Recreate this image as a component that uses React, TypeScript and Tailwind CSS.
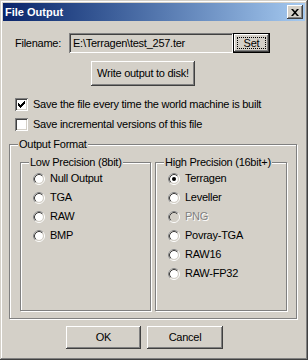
import React from 'react'

const raised =
  'shadow-[inset_-1px_-1px_#404040,inset_1px_1px_#ffffff,inset_-2px_-2px_#808080,inset_2px_2px_#d4d0c8]'
const sunken =
  'shadow-[inset_1px_1px_#808080,inset_-1px_-1px_#ffffff,inset_2px_2px_#404040,inset_-2px_-2px_#d4d0c8]'

function Radio({ checked = false, disabled = false }: { checked?: boolean; disabled?: boolean }) {
  return (
    <svg width="12" height="12" viewBox="0 0 12 12" className="shrink-0">
      <circle cx="6" cy="6" r="4" fill={disabled ? '#d4d0c8' : '#ffffff'} />
      <circle cx="6" cy="6" r="5.5" fill="none" stroke="#ffffff" />
      <path d="M2.11 9.89 A5.5 5.5 0 0 1 9.89 2.11" fill="none" stroke="#808080" />
      <circle cx="6" cy="6" r="4.5" fill="none" stroke="#d4d0c8" />
      <path d="M2.82 9.18 A4.5 4.5 0 0 1 9.18 2.82" fill="none" stroke="#404040" />
      {checked && <circle cx="6" cy="6" r="2" fill="#000000" />}
    </svg>
  )
}

function Checkbox({ checked = false }: { checked?: boolean }) {
  return (
    <div className={`flex h-[13px] w-[13px] shrink-0 items-center justify-center bg-white ${sunken}`}>
      {checked && (
        <svg width="7" height="7" viewBox="0 0 7 7">
          <path d="M0 2h1v1h1v1h1v-1h1v-1h1v-1h1v-1h1v3h-1v1h-1v1h-1v1h-1v1h-1v-1h-1v-1h-1z" fill="#000" />
        </svg>
      )}
    </div>
  )
}

function Option({ label, checked, disabled }: { label: string; checked?: boolean; disabled?: boolean }) {
  return (
    <div className="flex h-[19px] items-center gap-[5px]">
      <Radio checked={checked} disabled={disabled} />
      <span className={disabled ? 'text-[#808080] [text-shadow:1px_1px_#ffffff]' : ''}>{label}</span>
    </div>
  )
}

function Group({ title, children, className = '' }: { title: string; children: React.ReactNode; className?: string }) {
  return (
    <fieldset
      className={`border border-[#808080] pl-[8px] shadow-[inset_1px_1px_#ffffff,1px_1px_#ffffff] ${className}`}
    >
      <legend className="bg-[#d4d0c8] px-[1px] leading-[13px]">{title}</legend>
      {children}
    </fieldset>
  )
}

export default function App() {
  return (
    <div
      className="flex h-[360px] w-[308px] flex-col bg-[#d4d0c8] text-[11px] leading-[13px] tracking-[-0.25px] text-black shadow-[inset_-1px_-1px_#404040,inset_1px_1px_#d4d0c8,inset_-2px_-2px_#808080,inset_2px_2px_#ffffff]"
      style={{ fontFamily: '"Liberation Sans", Arial, sans-serif' }}
    >
      {/* Title bar */}
      <div className="mx-[3px] mt-[3px] flex h-[18px] items-start justify-between bg-gradient-to-r from-[#0a246a] to-[#a6caf0] pl-[2px] pr-[2px]">
        <span className="mt-[3px] text-[11px] font-bold tracking-normal text-white">File Output</span>
        <div className={`mt-[2px] flex h-[14px] w-[16px] items-center justify-center bg-[#d4d0c8] ${raised}`}>
          <svg width="8" height="7" viewBox="0 0 8 7">
            <path d="M0 0h2l2 2.3L6 0h2L5 3.5 8 7H6L4 4.7 2 7H0l3-3.5z" fill="#000" />
          </svg>
        </div>
      </div>

      {/* Filename row */}
      <div className="mt-[12px] flex h-[20px] items-center pl-[15px]">
        <span className="w-[54px]">Filename:</span>
        <div className={`flex h-[20px] w-[164px] items-center bg-[#d4d0c8] pl-[4px] ${sunken}`}>
          E:\Terragen\test_257.ter
        </div>
        <button className="flex h-[20px] w-[37px] items-center justify-center border border-black bg-[#d4d0c8] p-0">
          <span className={`flex h-full w-full p-[3px] ${raised}`}>
            <span className="flex flex-1 items-center justify-center border border-dotted border-black">Set</span>
          </span>
        </button>
      </div>

      {/* Write button */}
      <div className="mt-[8px] pl-[91px]">
        <button className={`h-[25px] w-[104px] bg-[#d4d0c8] ${raised}`}>Write output to disk!</button>
      </div>

      {/* Checkboxes */}
      <div className="mt-[12px] flex items-center gap-[5px] pl-[15px]">
        <Checkbox checked />
        <span>Save the file every time the world machine is built</span>
      </div>
      <div className="mt-[7px] flex items-center gap-[5px] pl-[15px]">
        <Checkbox />
        <span>Save incremental versions of this file</span>
      </div>

      {/* Output format */}
      <Group title="Output Format" className="ml-[9px] mt-[7px] w-[288px] pb-[7px] pr-[9px]">
        <div className="mt-[5px] grid grid-cols-[131px_132px] gap-x-[4px] pl-[2px]">
          <Group title="Low Precision (8bit)">
            <div className="pl-[4px]">
              <Option label="Null Output" />
              <Option label="TGA" />
              <Option label="RAW" />
              <Option label="BMP" />
            </div>
          </Group>
          <Group title="High Precision (16bit+)" className="pb-[27px]">
            <div className="pl-[4px]">
              <Option label="Terragen" checked />
              <Option label="Leveller" />
              <Option label="PNG" disabled />
              <Option label="Povray-TGA" />
              <Option label="RAW16" />
              <Option label="RAW-FP32" />
            </div>
          </Group>
        </div>
      </Group>

      {/* Dialog buttons */}
      <div className="mt-[7px] flex gap-[6px] pl-[66px]">
        <button className={`h-[23px] w-[75px] bg-[#d4d0c8] ${raised}`}>OK</button>
        <button className={`h-[23px] w-[76px] bg-[#d4d0c8] ${raised}`}>Cancel</button>
      </div>
    </div>
  )
}
